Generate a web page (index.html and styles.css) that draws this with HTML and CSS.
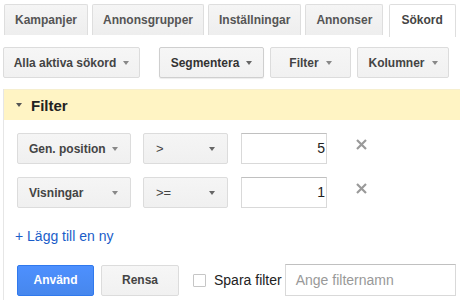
FILE: index.html
```html
<!DOCTYPE html>
<html lang="sv">
<head>
<meta charset="utf-8">
<link rel="stylesheet" href="styles.css">
</head>
<body>
<div class="tabs">
  <div class="tab">Kampanjer</div>
  <div class="tab">Annonsgrupper</div>
  <div class="tab">Inställningar</div>
  <div class="tab">Annonser</div>
  <div class="tab active">Sökord</div>
  <div class="tab stub"></div>
</div>
<div class="toolbar">
  <div class="btn b-all">Alla aktiva sökord<span class="caret light"></span></div>
  <div class="btn b-seg">Segmentera<span class="caret"></span></div>
  <div class="btn b-fil">Filter<span class="caret light"></span></div>
  <div class="btn b-col">Kolumner<span class="caret light"></span></div>
</div>
<div class="panel">
  <div class="panel-head"><span class="head-caret"></span>Filter</div>
  <div class="panel-body">
    <div class="row">
      <div class="dd dd-field"><span>Gen. position</span><span class="caret light"></span></div>
      <div class="dd dd-op"><span class="op">&gt;</span><span class="caret"></span></div>
      <div class="num">5</div>
      <svg class="x" width="11" height="11" viewBox="0 0 11 11"><path d="M1 1L10 10M10 1L1 10" stroke="#9a9a9a" stroke-width="2.2" fill="none"/></svg>
    </div>
    <div class="row">
      <div class="dd dd-field"><span>Visningar</span><span class="caret light"></span></div>
      <div class="dd dd-op"><span class="op">&gt;=</span><span class="caret"></span></div>
      <div class="num">1</div>
      <svg class="x" width="11" height="11" viewBox="0 0 11 11"><path d="M1 1L10 10M10 1L1 10" stroke="#9a9a9a" stroke-width="2.2" fill="none"/></svg>
    </div>
    <div class="add">+ Lägg till en ny</div>
    <div class="actions">
      <div class="btn primary">Använd</div>
      <div class="btn b-clear">Rensa</div>
      <span class="check"></span>
      <span class="save-label">Spara filter</span>
      <div class="name-input">Ange filternamn</div>
    </div>
  </div>
</div>
</body>
</html>
```
FILE: styles.css
```css
html, body {
  margin: 0;
  padding: 0;
  background: #fff;
  width: 460px;
  height: 300px;
  overflow: hidden;
  font-family: "Liberation Sans", Arial, sans-serif;
  color: #444;
}
.tabs {
  display: flex;
  padding: 4px 0 0 4px;
  gap: 4px;
  white-space: nowrap;
}
.tab {
  height: 30px;
  line-height: 30px;
  padding: 0 10px;
  border: 1px solid #dedede;
  border-bottom: none;
  background: linear-gradient(#f5f5f5, #eeeeee);
  font-size: 12px;
  font-weight: bold;
  color: #555;
  border-radius: 2px 2px 0 0;
}
.tab.active {
  background: #fff;
  color: #444;
  height: 32px;
  margin-left: 2px;
  padding: 0 12px 0 11px;
}
.tab.stub { flex: 1; padding: 0; min-width: 4px; }
.toolbar {
  display: flex;
  margin-top: 10px;
  padding-left: 3px;
}
.btn {
  box-sizing: border-box;
  height: 31px;
  display: flex;
  align-items: center;
  justify-content: center;
  border: 1px solid #dcdcdc;
  border-radius: 2px;
  background: linear-gradient(#f6f6f6, #f1f1f1);
  font-size: 12px;
  font-weight: bold;
  color: #444;
  white-space: nowrap;
}
.b-all { width: 137px; }
.b-seg { width: 105px; margin-left: 19px; border-color: #cfcfcf; box-shadow: 0 1px 1px rgba(0,0,0,0.08); color: #333; }
.b-fil { width: 81px; margin-left: 6px; }
.b-col { width: 92px; margin-left: 6px; }
.caret {
  display: inline-block;
  width: 0; height: 0;
  border-left: 3.5px solid transparent;
  border-right: 3.5px solid transparent;
  border-top: 4px solid #666;
  margin-left: 7px;
  margin-top: 1px;
}
.caret.light { border-top-color: #888; }
.panel {
  margin-top: 11px;
  margin-left: 3px;
  border-left: 1px solid #e6e6e6;
  height: 220px;
}
.panel-head {
  height: 31px;
  box-sizing: border-box;
  border-top: 1px solid #f6efcf;
  background: #fff4c4;
  display: flex;
  align-items: center;
  font-size: 15px;
  font-weight: bold;
  color: #222;
  padding-left: 12px;
}
.head-caret {
  width: 0; height: 0;
  border-left: 3.5px solid transparent;
  border-right: 3.5px solid transparent;
  border-top: 4px solid #555;
  margin-right: 9px;
}
.panel-body {
  padding: 13px 0 0 13px;
}
.row {
  display: flex;
  align-items: flex-start;
  margin-bottom: 13px;
}
.dd {
  box-sizing: border-box;
  height: 31px;
  display: flex;
  align-items: center;
  justify-content: space-between;
  border: 1px solid #dcdcdc;
  border-radius: 2px;
  background: linear-gradient(#f5f5f5, #f0f0f0);
  font-size: 12px;
  font-weight: bold;
  color: #444;
  padding: 0 12px 0 11px;
}
.dd .caret { margin-left: 0; }
.dd-field { width: 114px; }
.dd-op { width: 85px; margin-left: 12px; padding-left: 12px; }
.op { font-weight: normal; font-size: 13px; color: #444; }
.num {
  box-sizing: border-box;
  width: 86px;
  height: 31px;
  margin-left: 13px;
  border: 1px solid #d9d9d9;
  border-top-color: #c0c0c0;
  text-align: right;
  padding: 0 1px 0 0;
  line-height: 29px;
  font-size: 14px;
  color: #222;
}
.x { margin: 6px 0 0 29px; }
.add {
  margin: 20px 0 0 -2px;
  font-size: 14px;
  line-height: 16px;
  color: #1a5dc9;
}
.actions {
  display: flex;
  align-items: center;
  margin-top: 20px;
}
.primary {
  width: 77px;
  background: linear-gradient(#4d90fe, #4787ed);
  border-color: #3079ed;
  color: #fff;
}
.b-clear { width: 78px; margin-left: 7px; }
.check {
  box-sizing: border-box;
  width: 13px;
  height: 13px;
  border: 1px solid #c6c6c6;
  border-radius: 1px;
  background: #fff;
  margin-left: 14px;
}
.save-label {
  margin-left: 8px;
  font-size: 14px;
  color: #222;
}
.name-input {
  box-sizing: border-box;
  width: 171px;
  height: 32px;
  margin-left: 3px;
  border: 1px solid #d9d9d9;
  border-top-color: #c0c0c0;
  padding-left: 10px;
  line-height: 30px;
  font-size: 14px;
  color: #999;
}
```
